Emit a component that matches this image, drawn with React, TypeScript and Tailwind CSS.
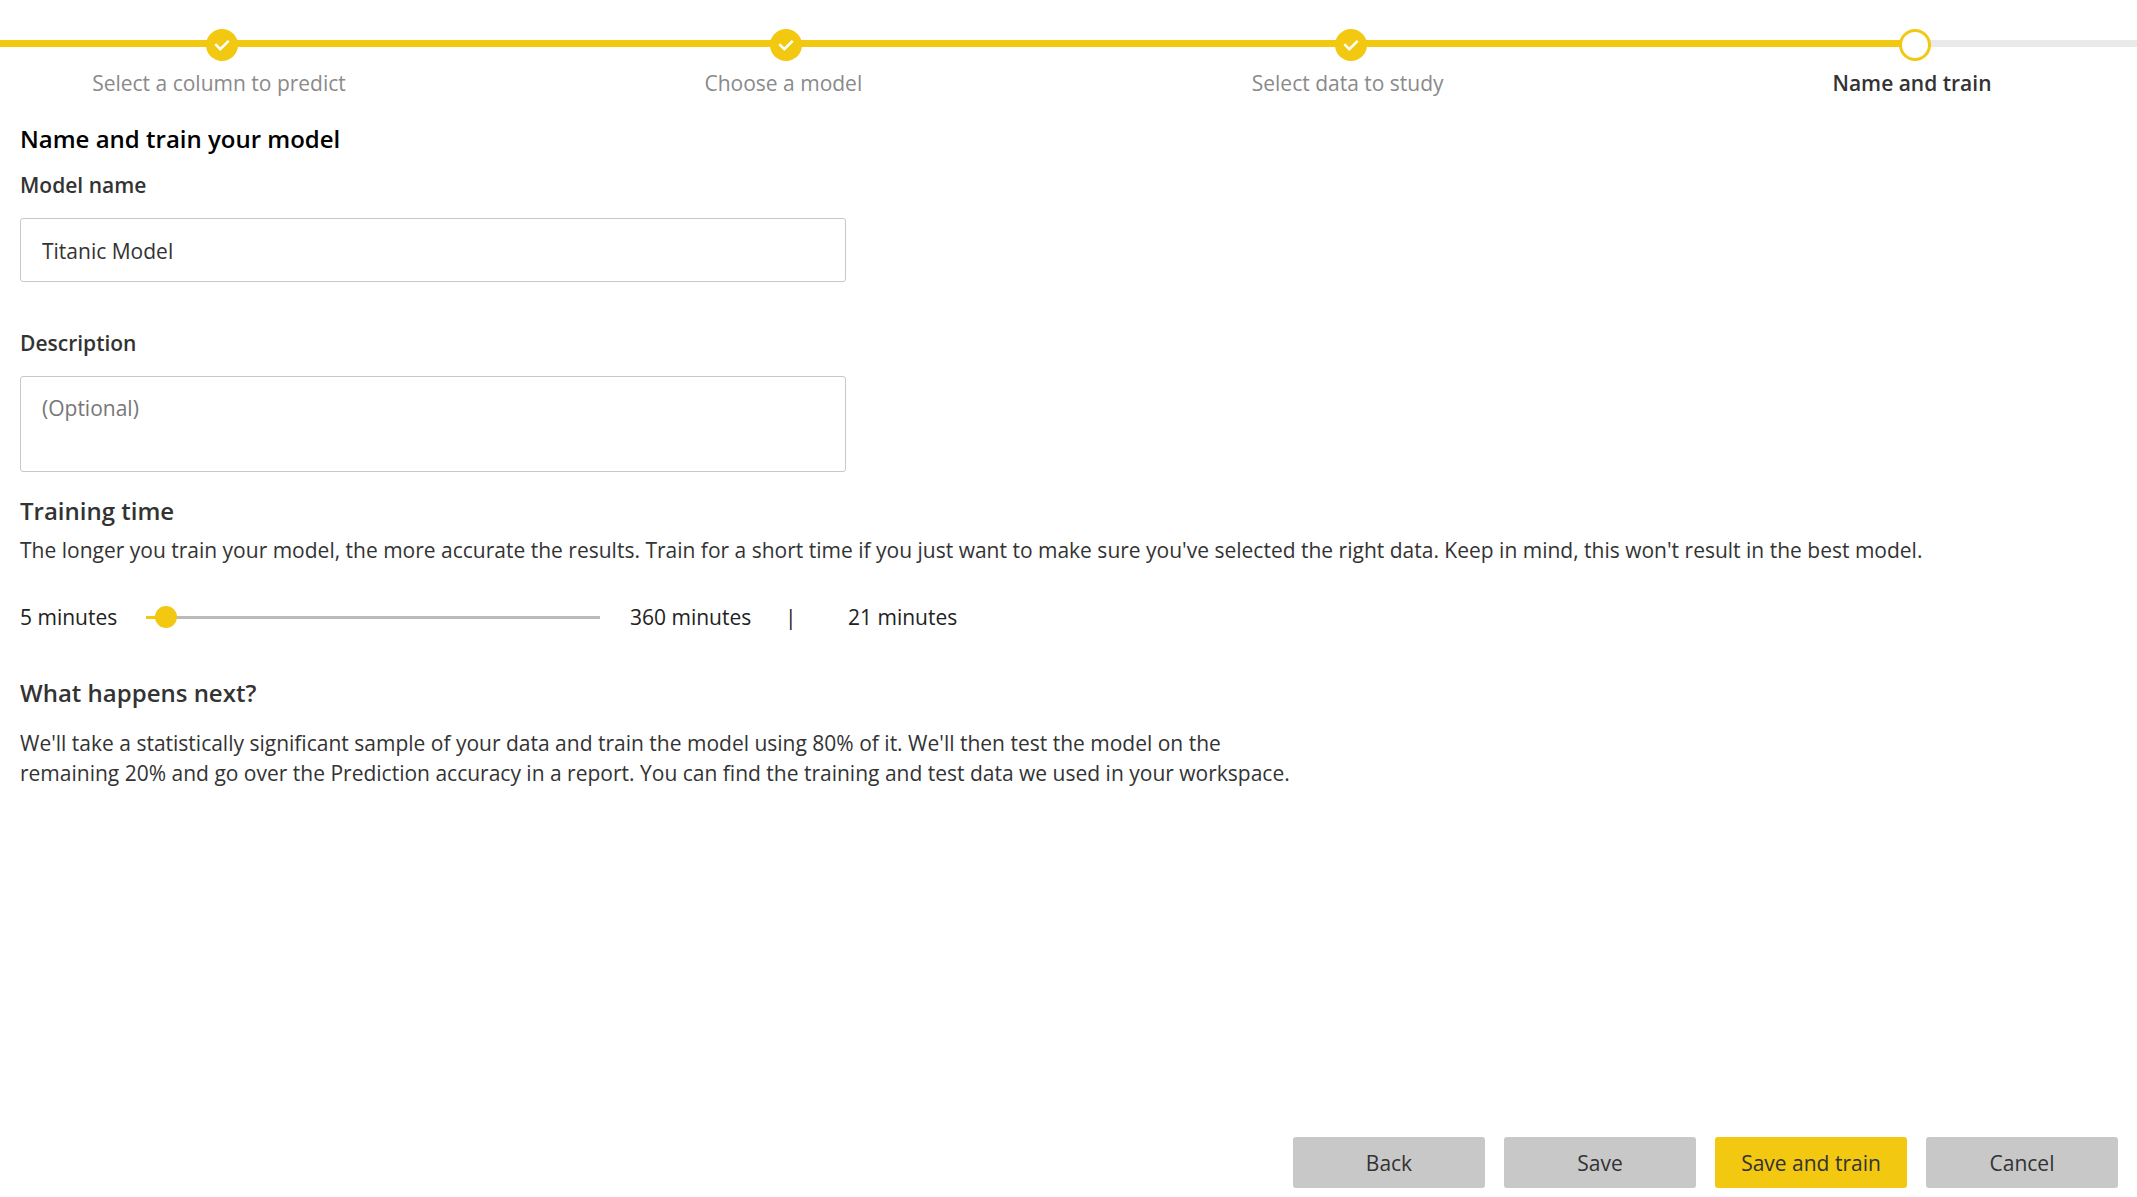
import { useState, type CSSProperties } from "react";

type Step = { label: string; done: boolean };

const steps: Step[] = [
  { label: "Select a column to predict", done: true },
  { label: "Choose a model", done: true },
  { label: "Select data to study", done: true },
  { label: "Name and train", done: false },
];

const MIN_MINUTES = 5;
const MAX_MINUTES = 360;

function Stepper() {
  return (
    <nav aria-label="Progress" className="relative pt-[29px]">
      <div aria-hidden="true" className="absolute inset-x-0 top-10 h-[7px] bg-[#eaeaea]" />
      <div aria-hidden="true" className="absolute left-0 right-[222px] top-10 h-[7px] bg-[#f2c811]" />
      <ol className="relative flex justify-between">
        {steps.map((step) => (
          <li
            key={step.label}
            aria-current={step.done ? undefined : "step"}
            className="flex w-[444px] flex-col items-center"
          >
            {step.done ? (
              <span className="flex size-8 items-center justify-center rounded-full bg-[#f2c811]">
                <svg viewBox="0 0 32 32" className="size-8" fill="none" stroke="#ffffff" strokeWidth="2.6">
                  <path d="M9.3 15.2 L14.3 20.2 L22.7 11.8" />
                </svg>
              </span>
            ) : (
              <span className="size-8 rounded-full border-3 border-[#f2c811] bg-white" />
            )}
            <span
              className={
                step.done
                  ? "mt-[7px] pr-1.5 leading-[30px] text-[#8a8a8a]"
                  : "mt-[7px] pr-1.5 font-semibold leading-[30px] text-[#333333]"
              }
            >
              {step.label}
            </span>
          </li>
        ))}
      </ol>
    </nav>
  );
}

function TimeSlider({ value, onChange }: { value: number; onChange: (v: number) => void }) {
  const filled: CSSProperties = {
    width: `${((value - MIN_MINUTES) / (MAX_MINUTES - MIN_MINUTES)) * 100}%`,
  };
  return (
    <div className="relative flex h-6 w-[454px] items-center">
      <div className="h-[3px] w-full bg-[#bababa]">
        <div className="h-full bg-[#f2c811]" style={filled} />
      </div>
      <input
        id="training-time"
        type="range"
        aria-label="Training time in minutes"
        min={MIN_MINUTES}
        max={MAX_MINUTES}
        value={value}
        onChange={(e) => onChange(Number(e.target.value))}
        className="absolute inset-y-0 -left-[11px] w-[476px] cursor-pointer appearance-none bg-transparent [&::-webkit-slider-thumb]:size-[22px] [&::-webkit-slider-thumb]:appearance-none [&::-webkit-slider-thumb]:rounded-full [&::-webkit-slider-thumb]:bg-[#f2c811]"
      />
    </div>
  );
}

function ActionButton({ label, primary = false }: { label: string; primary?: boolean }) {
  return (
    <button
      type="button"
      className={
        primary
          ? "h-[51px] w-48 rounded-[3px] bg-[#f2c811] pt-0.5 text-[#333333]"
          : "h-[51px] w-48 rounded-[3px] bg-[#c8c8c8] pt-0.5 text-[#333333]"
      }
    >
      {label}
    </button>
  );
}

export default function App() {
  const [name, setName] = useState("Titanic Model");
  const [description, setDescription] = useState("");
  const [minutes, setMinutes] = useState(21);

  return (
    <div className="flex min-h-screen flex-col bg-white font-['Open_Sans','Noto_Sans',sans-serif] text-[21px] text-[#333333]">
      <Stepper />
      <main className="flex flex-col px-5 pt-[25px]">
        <h1 className="text-[24px] font-semibold leading-8 text-black">Name and train your model</h1>

        <label htmlFor="model-name" className="mt-[15px] font-semibold leading-[30px]">
          Model name
        </label>
        <input
          id="model-name"
          type="text"
          value={name}
          onChange={(e) => setName(e.target.value)}
          className="mt-[18px] h-16 w-full max-w-[826px] rounded-[3px] border border-[#c8c8c8] px-[21px] pt-0.5"
        />

        <label htmlFor="description" className="mt-[46px] font-semibold leading-[30px]">
          Description
        </label>
        <textarea
          id="description"
          placeholder="(Optional)"
          value={description}
          onChange={(e) => setDescription(e.target.value)}
          className="mt-[18px] h-24 w-full max-w-[826px] resize-none rounded-[3px] border border-[#c8c8c8] px-[21px] py-4 leading-[30px] placeholder:text-[#777777]"
        />

        <h2 className="mt-[23px] text-[24px] font-semibold leading-8">Training time</h2>
        <p className="mt-2 leading-[30px]">
          The longer you train your model, the more accurate the results. Train for a short time if you just want to
          make sure you've selected the right data. Keep in mind, this won't result in the best model.
        </p>

        <div className="mt-[37px] flex items-center leading-[30px] text-[#222222]">
          <span className="w-[126px]">{MIN_MINUTES} minutes</span>
          <TimeSlider value={minutes} onChange={setMinutes} />
          <span className="ml-[30px] w-[155px]">{MAX_MINUTES} minutes</span>
          <span className="w-[63px]">|</span>
          <output htmlFor="training-time">{minutes} minutes</output>
        </div>

        <h2 className="mt-[45px] text-[24px] font-semibold leading-8">What happens next?</h2>
        <p className="mt-[19px] max-w-[1300px] leading-[30px]">
          We'll take a statistically significant sample of your data and train the model using 80% of it. We'll then
          test the model on the remaining 20% and go over the Prediction accuracy in a report. You can find the
          training and test data we used in your workspace.
        </p>
      </main>
      <footer className="mt-auto flex justify-end gap-[19px] px-[19px] pb-[9px]">
        <ActionButton label="Back" />
        <ActionButton label="Save" />
        <ActionButton label="Save and train" primary />
        <ActionButton label="Cancel" />
      </footer>
    </div>
  );
}
